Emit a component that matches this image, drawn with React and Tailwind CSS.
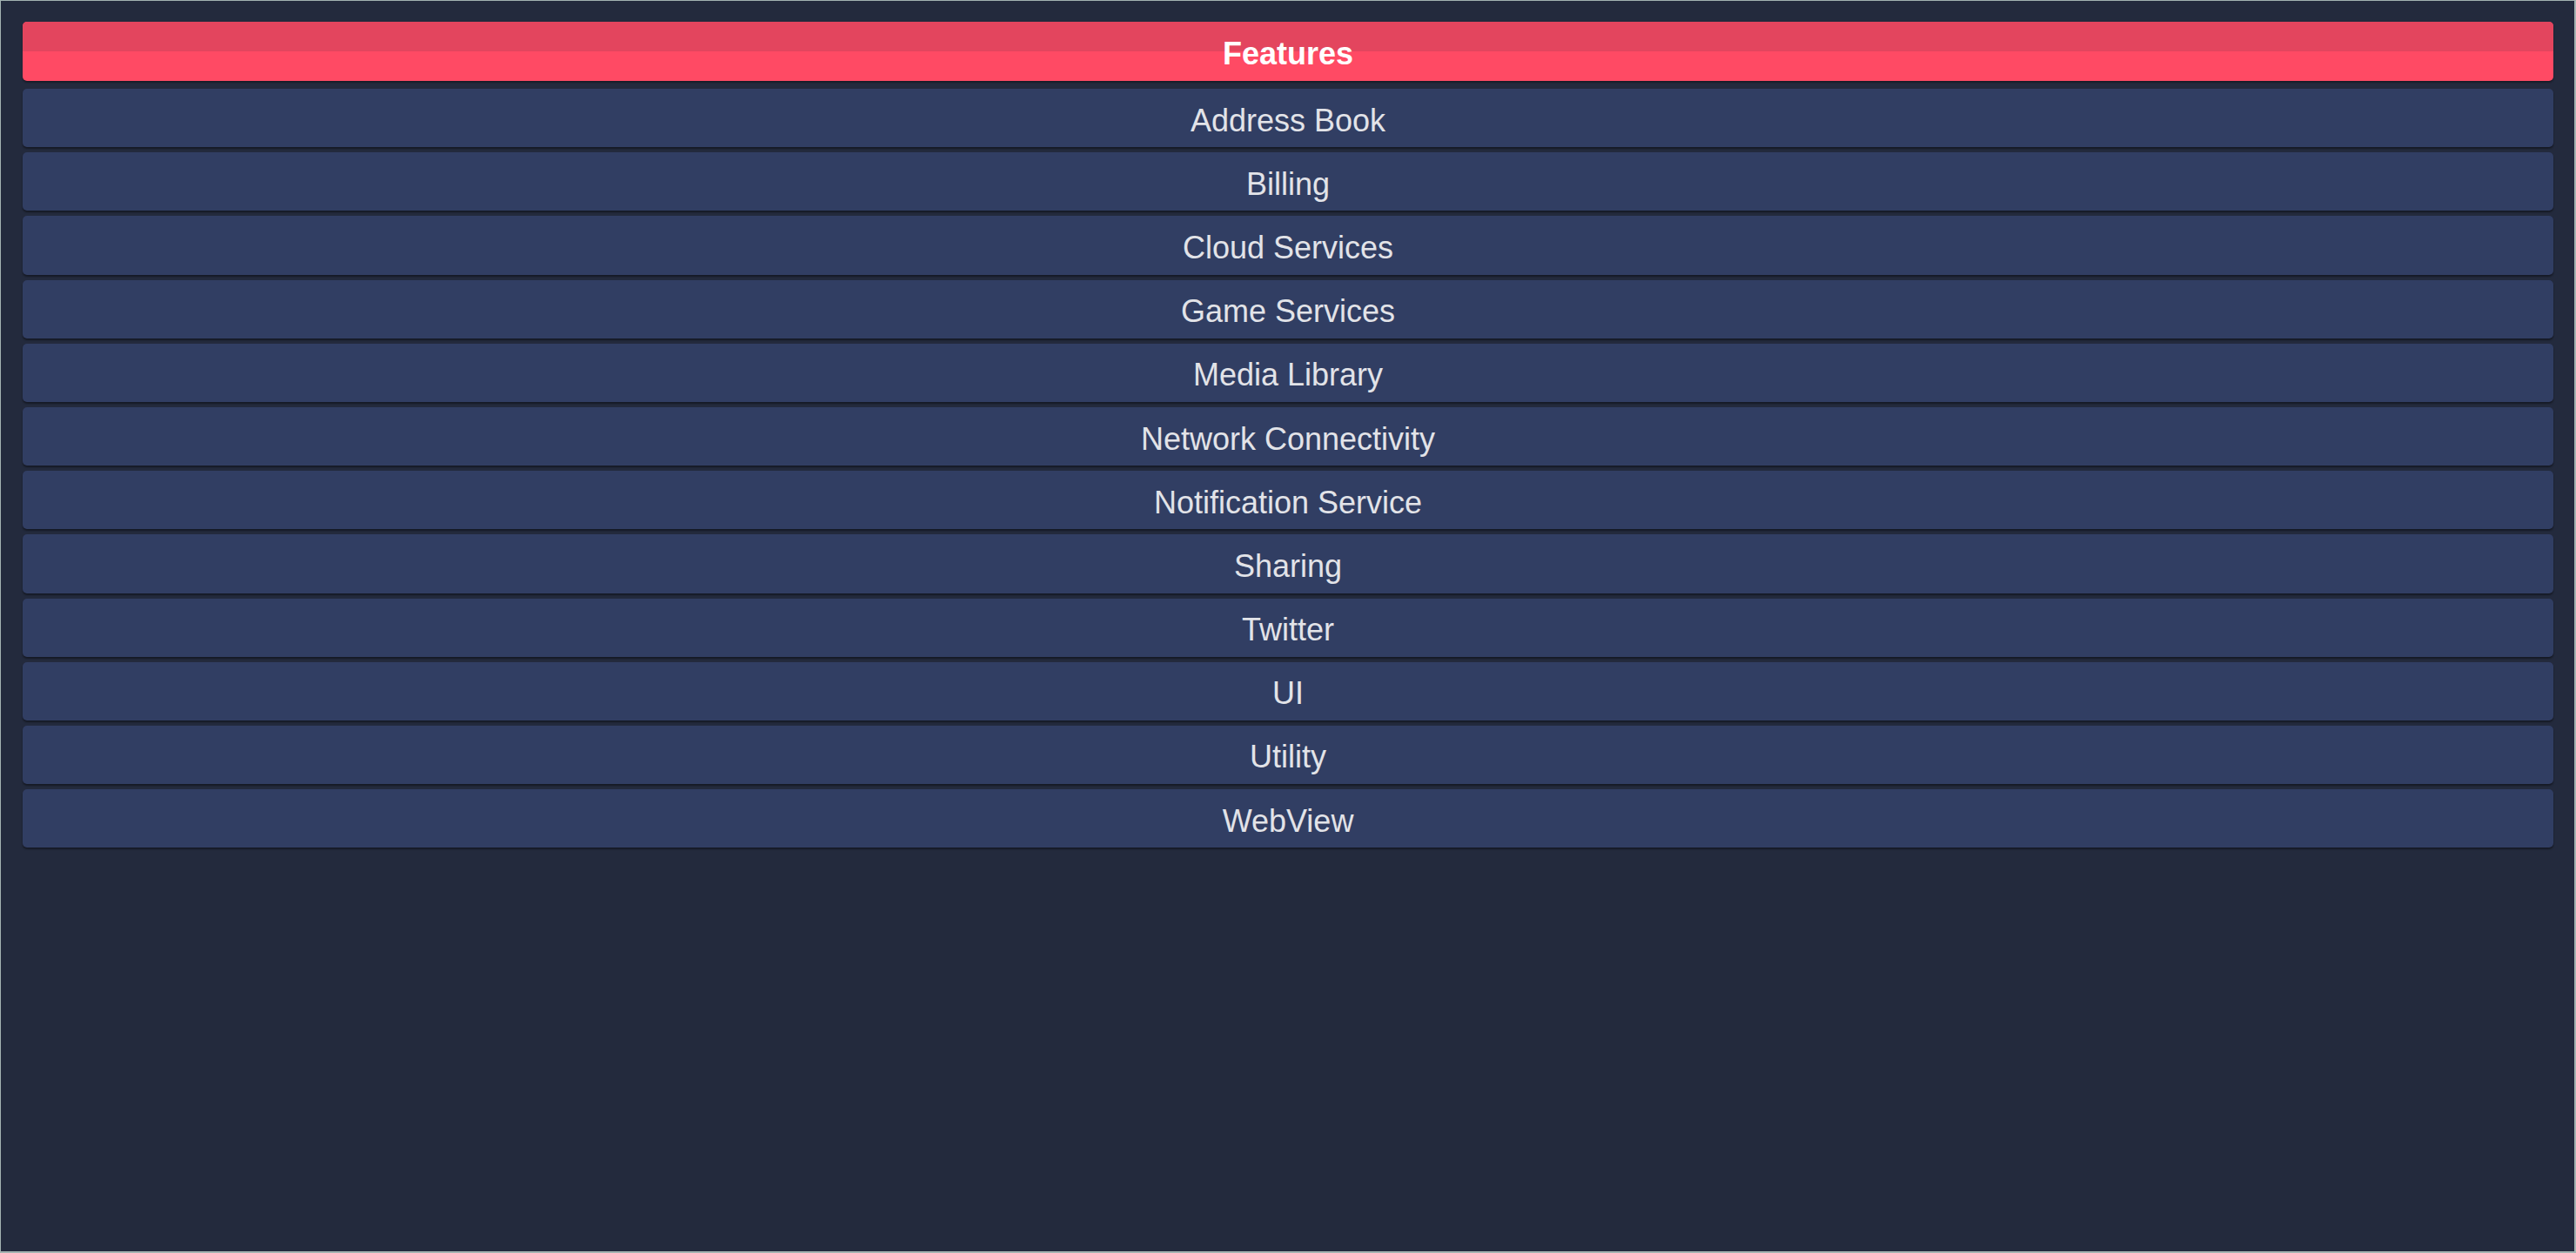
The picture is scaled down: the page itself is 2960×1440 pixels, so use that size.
const features = [
  "Address Book",
  "Billing",
  "Cloud Services",
  "Game Services",
  "Media Library",
  "Network Connectivity",
  "Notification Service",
  "Sharing",
  "Twitter",
  "UI",
  "Utility",
  "WebView",
];

export default function App() {
  return (
    <div
      className="h-[1440px] w-full border border-r-2 border-b-2 border-[#a3b3b1] bg-[#232a3d] pl-[25px] pr-[24px] pt-[24px]"
      style={{ fontFamily: '"Liberation Sans", Arial, sans-serif' }}
    >
      {/* Header */}
      <div className="relative mb-[9px] h-[68px] overflow-hidden rounded-[5px] bg-[#ff4a64] shadow-[0_2px_2px_rgba(0,0,0,0.35)]">
        <div className="absolute inset-x-0 top-0 h-[34px] bg-[#e3455e]" />
        <div className="relative flex h-full items-center justify-center pt-[6px] text-[36px] font-bold text-white">
          Features
        </div>
      </div>

      {/* Feature rows */}
      <div className="flex flex-col gap-[6px]">
        {features.map((f) => (
          <div
            key={f}
            className="flex h-[67.2px] items-center justify-center rounded-[5px] bg-[#313e63] pt-[6px] text-[36px] text-[#e2e3e8] shadow-[0_2px_2px_rgba(0,0,0,0.4)]"
          >
            {f}
          </div>
        ))}
      </div>
    </div>
  );
}
